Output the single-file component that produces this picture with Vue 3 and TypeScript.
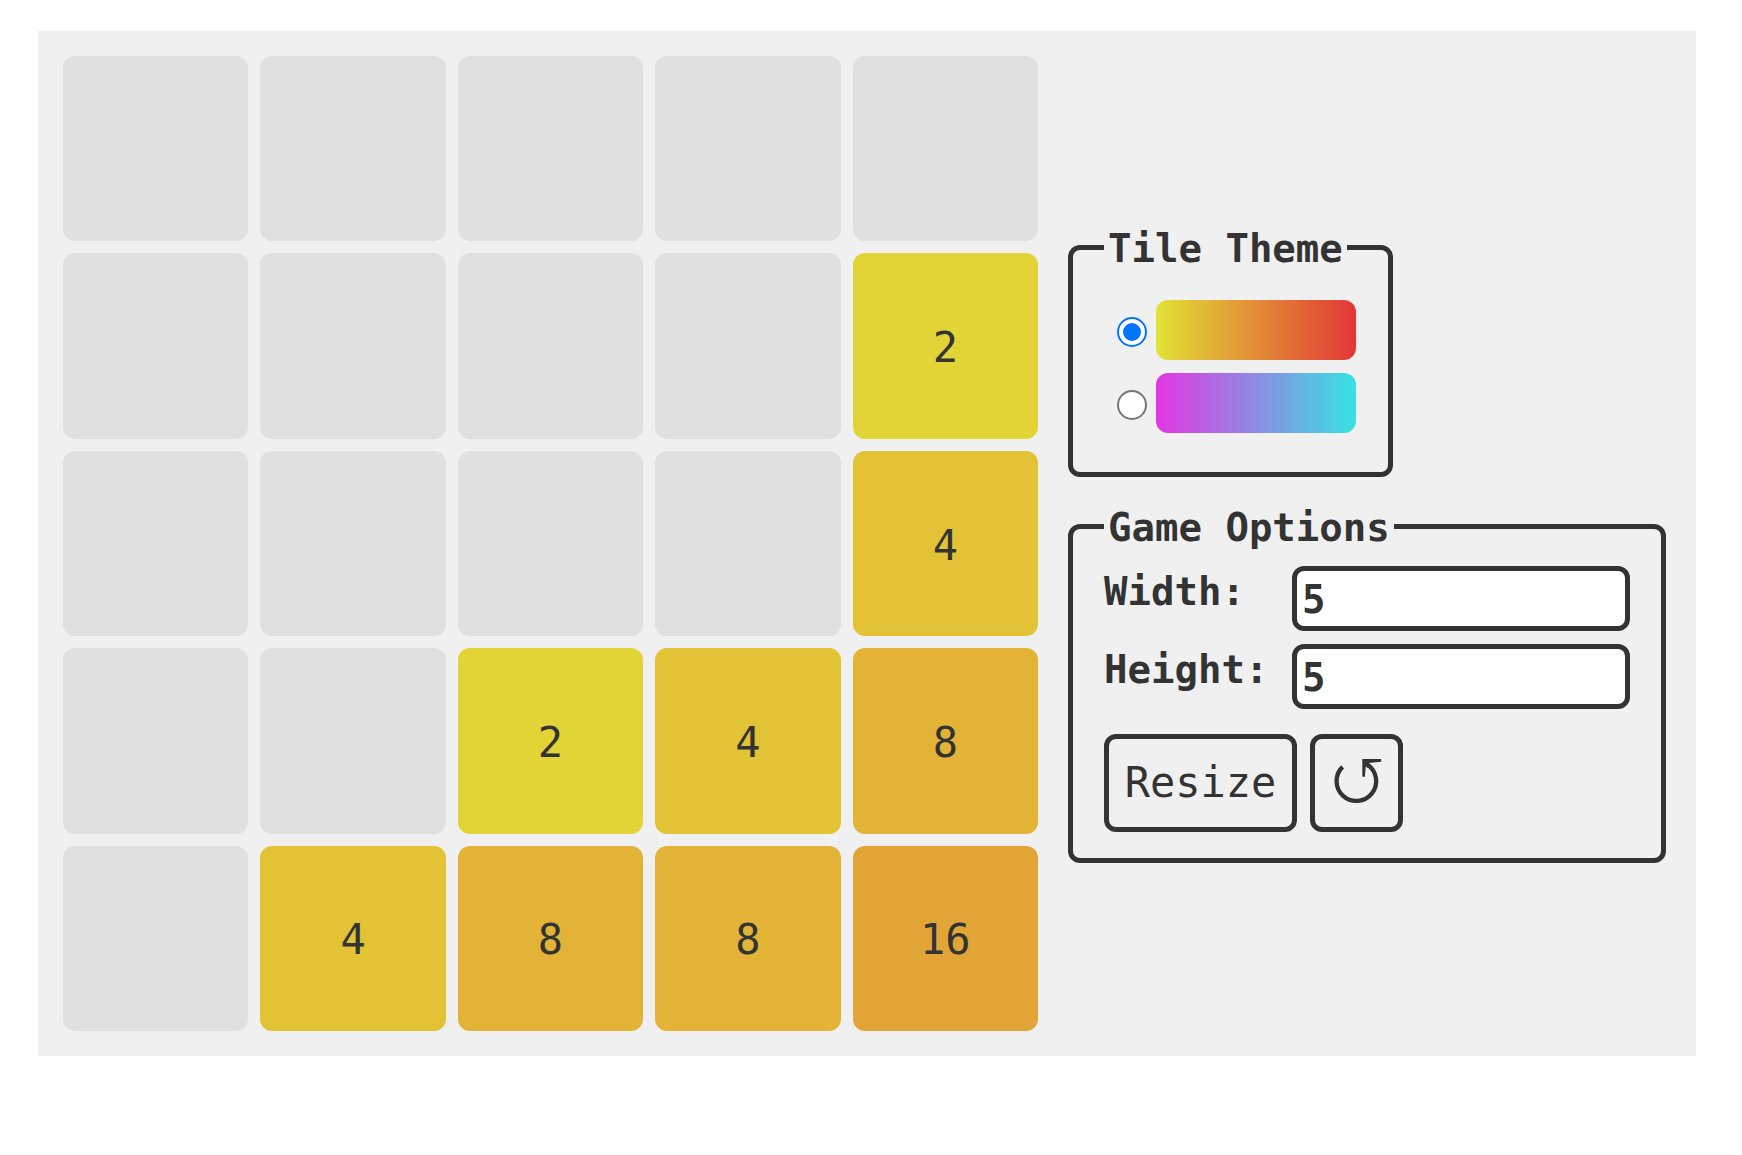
<script setup lang="ts">
import { ref } from 'vue'

type Theme = 'warm' | 'cool'

const themes: { id: Theme; label: string }[] = [
  { id: 'warm', label: 'Yellow to red' },
  { id: 'cool', label: 'Magenta to cyan' },
]

const theme = ref<Theme>('warm')
const width = ref(5)
const height = ref(5)

const start = [
  [0, 0, 0, 0, 0],
  [0, 0, 0, 0, 2],
  [0, 0, 0, 0, 4],
  [0, 0, 2, 4, 8],
  [0, 4, 8, 8, 16],
]
const rows = ref<number[][]>(start.map((row) => [...row]))

// Each doubling moves the tile one eleventh of the way along the theme's hues.
function tileColor(value: number): string {
  const step = Math.min(Math.log2(value), 11) / 11
  const hue = theme.value === 'warm' ? 60 - 60 * step : 300 - 120 * step
  return `hsl(${hue}, 75%, 55%)`
}

function resize() {
  rows.value = Array.from({ length: height.value }, (_, y) =>
    Array.from({ length: width.value }, (_, x) => rows.value[y]?.[x] ?? 0),
  )
}

function reset() {
  rows.value = start.map((row) => [...row])
}
</script>

<template>
  <main class="game">
    <section class="board" aria-label="Board">
      <template v-for="(row, y) in rows" :key="y">
        <div
          v-for="(value, x) in row"
          :key="x"
          class="tile"
          :style="value ? { backgroundColor: tileColor(value) } : undefined"
        >{{ value || '' }}</div>
      </template>
    </section>

    <form class="settings" @submit.prevent="resize">
      <fieldset class="themes">
        <legend>Tile Theme</legend>
        <label v-for="t in themes" :key="t.id" class="theme">
          <input v-model="theme" type="radio" name="theme" :value="t.id" :aria-label="t.label" />
          <span class="swatch" :class="t.id"></span>
        </label>
      </fieldset>

      <fieldset class="options">
        <legend>Game Options</legend>
        <div class="field">
          <label for="board-width">Width:</label>
          <input id="board-width" v-model.number="width" type="number" min="2" />
        </div>
        <div class="field">
          <label for="board-height">Height:</label>
          <input id="board-height" v-model.number="height" type="number" min="2" />
        </div>
        <div class="actions">
          <button class="resize" type="submit">Resize</button>
          <button class="reset" type="button" aria-label="Restart" @click="reset">
            <svg viewBox="0 0 50 50" width="50" height="50" aria-hidden="true">
              <path d="M10.6 8.9 A19.8 19.8 0 1 0 35.6 6.8" fill="none" stroke="#333" stroke-width="4.3" />
              <path d="M30.3 1 H49.2 V3.8 L36.4 4.9 L38.8 7 L35.6 10 L33.8 8.2 L32.9 18.8 H30.3 Z" fill="#333" />
            </svg>
          </button>
        </div>
      </fieldset>
    </form>
  </main>
</template>

<style>
body {
  background: #fff;
}
</style>

<style scoped>
.game {
  display: flex;
  align-items: center;
  gap: 30px;
  margin: 31px 46px 0 38px;
  padding: 25px 30px 25px 25px;
  background: #f0f0f0;
  color: #333;
  font-family: "DejaVu Sans Mono", monospace;
}

.board {
  display: grid;
  flex: 975 1 0;
  min-width: 0;
  aspect-ratio: 1;
  grid-template-columns: repeat(5, 19%);
  grid-template-rows: repeat(5, 19%);
  place-content: space-between;
}

.tile {
  display: flex;
  align-items: center;
  justify-content: center;
  box-sizing: border-box;
  padding-top: 3px;
  border-radius: 12px;
  background: #e0e0e0;
  font-size: 42px;
}

.settings {
  display: flex;
  flex: 598 1 0;
  flex-direction: column;
  align-items: flex-start;
  gap: 25px;
  min-width: 0;
  padding-bottom: 2px;
}

fieldset {
  box-sizing: border-box;
  min-width: 0;
  margin: 0;
  border: 5px solid #333;
  border-radius: 12px;
  font-size: 39px;
  font-weight: bold;
}

legend {
  padding: 2px 4px 0;
  line-height: 48px;
}

.themes {
  padding: 27px 32px 39px 31px;
}

.theme {
  display: flex;
  align-items: center;
  gap: 9px;
  padding-left: 13px;
}

.theme + .theme {
  margin-top: 13px;
}

.theme input {
  display: grid;
  place-content: center;
  box-sizing: border-box;
  width: 30px;
  height: 30px;
  margin: 5px 0 0;
  border: 2px solid #767676;
  border-radius: 50%;
  background: #fff;
  appearance: none;
}

.theme input:checked {
  border-color: #0075ff;
}

.theme input:checked::before {
  width: 18px;
  height: 18px;
  border-radius: 50%;
  background: #0075ff;
  content: "";
}

.swatch {
  width: 200px;
  height: 60px;
  border-radius: 12px;
}

.swatch.warm {
  background: linear-gradient(to right, hsl(60, 75%, 55%), hsl(0, 75%, 55%));
}

.swatch.cool {
  background: linear-gradient(to right, hsl(300, 75%, 55%), hsl(180, 75%, 55%));
}

.options {
  width: 100%;
  padding: 14px 31px 26px;
}

.field {
  display: flex;
  align-items: flex-start;
  margin-bottom: 13px;
}

.field label {
  flex: 0 0 188px;
  line-height: 52px;
}

.field input {
  box-sizing: border-box;
  flex: 1;
  min-width: 0;
  height: 65px;
  padding: 2px 5px 0;
  border: 5px solid #333;
  border-radius: 12px;
  background: #fff;
  color: inherit;
  font: inherit;
}

.actions {
  display: flex;
  gap: 13px;
  margin-top: 25px;
}

button {
  display: flex;
  align-items: center;
  justify-content: center;
  box-sizing: border-box;
  height: 98px;
  padding: 0;
  border: 5px solid #333;
  border-radius: 12px;
  background: #f0f0f0;
  color: inherit;
  font-family: inherit;
  font-size: 42px;
}

.resize {
  width: 193px;
}

.reset {
  width: 93px;
}
</style>
